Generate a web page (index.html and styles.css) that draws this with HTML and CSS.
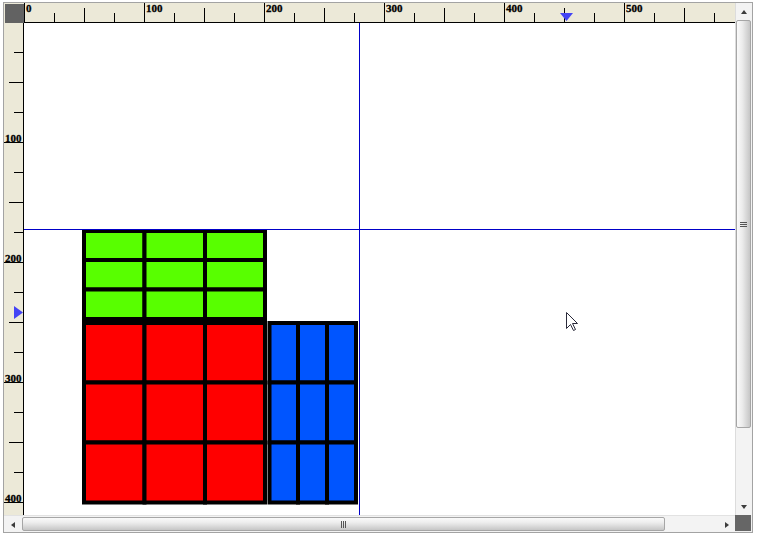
FILE: index.html
```html
<!DOCTYPE html>
<html>
<head>
<meta charset="utf-8">
<link rel="stylesheet" href="styles.css">
</head>
<body>
<div class="frame">
  <div class="corner-tl"><div class="corner-dark"></div></div>
  <div class="ruler-top">
    <svg class="rsvg" width="711" height="20" viewBox="0 0 711 20">
      <path class="tick" d="M0.5 0V19M120.5 0V19M240.5 0V19M360.5 0V19M480.5 0V19M600.5 0V19"/>
      <path class="tick" d="M60.5 5V19M180.5 5V19M300.5 5V19M420.5 5V19M540.5 5V19M660.5 5V19"/>
      <path class="tick" d="M30.5 10V19M90.5 10V19M150.5 10V19M210.5 10V19M270.5 10V19M330.5 10V19M390.5 10V19M450.5 10V19M510.5 10V19M570.5 10V19M630.5 10V19M690.5 10V19"/>
      <path class="tick" d="M0 19.5H711"/>
      <text class="rlabel" x="2" y="9">0</text>
      <text class="rlabel" x="122" y="9">100</text>
      <text class="rlabel" x="242" y="9">200</text>
      <text class="rlabel" x="362" y="9">300</text>
      <text class="rlabel" x="482" y="9">400</text>
      <text class="rlabel" x="602" y="9">500</text>
      <polygon class="marker" points="536,10 549,10 542.5,18"/>
    </svg>
  </div>
  <div class="vscroll">
    <div class="sbtn"><span class="arr arr-up"></span></div>
    <div class="vtrack">
      <div class="vthumb"><span class="grip-h"></span></div>
    </div>
    <div class="sbtn"><span class="arr arr-down"></span></div>
  </div>
  <div class="ruler-left">
    <svg class="rsvg" width="20" height="492" viewBox="0 0 20 492">
      <path class="tick" d="M0 119.5H19M0 239.5H19M0 359.5H19M0 479.5H19"/>
      <path class="tick" d="M5 59.5H19M5 179.5H19M5 299.5H19M5 419.5H19"/>
      <path class="tick" d="M10 29.5H19M10 89.5H19M10 149.5H19M10 209.5H19M10 269.5H19M10 329.5H19M10 389.5H19M10 449.5H19"/>
      <path class="tick" d="M19.5 0V492"/>
      <text class="rlabel" x="1" y="119">100</text>
      <text class="rlabel" x="1" y="239">200</text>
      <text class="rlabel" x="1" y="359">300</text>
      <text class="rlabel" x="1" y="479">400</text>
      <polygon class="marker" points="10,283 10,296 19,289.5"/>
    </svg>
  </div>
  <div class="canvas">
    <svg width="711" height="492" viewBox="0 0 711 492">
      <g class="cells green">
        <rect x="60" y="208" width="60.5" height="29"/>
        <rect x="120.5" y="208" width="60.5" height="29"/>
        <rect x="181" y="208" width="60" height="29"/>
        <rect x="60" y="237" width="60.5" height="29.5"/>
        <rect x="120.5" y="237" width="60.5" height="29.5"/>
        <rect x="181" y="237" width="60" height="29.5"/>
        <rect x="60" y="266.5" width="60.5" height="29.5"/>
        <rect x="120.5" y="266.5" width="60.5" height="29.5"/>
        <rect x="181" y="266.5" width="60" height="29.5"/>
      </g>
      <g class="cells red">
        <rect x="60" y="300" width="60.5" height="59.5"/>
        <rect x="120.5" y="300" width="60.5" height="59.5"/>
        <rect x="181" y="300" width="60" height="59.5"/>
        <rect x="60" y="359.5" width="60.5" height="60"/>
        <rect x="120.5" y="359.5" width="60.5" height="60"/>
        <rect x="181" y="359.5" width="60" height="60"/>
        <rect x="60" y="419.5" width="60.5" height="60"/>
        <rect x="120.5" y="419.5" width="60.5" height="60"/>
        <rect x="181" y="419.5" width="60" height="60"/>
      </g>
      <g class="cells blue">
        <rect x="245.5" y="300" width="28.5" height="59.5"/>
        <rect x="274" y="300" width="29" height="59.5"/>
        <rect x="303" y="300" width="29" height="59.5"/>
        <rect x="245.5" y="359.5" width="28.5" height="60"/>
        <rect x="274" y="359.5" width="29" height="60"/>
        <rect x="303" y="359.5" width="29" height="60"/>
        <rect x="245.5" y="419.5" width="28.5" height="60"/>
        <rect x="274" y="419.5" width="29" height="60"/>
        <rect x="303" y="419.5" width="29" height="60"/>
      </g>
      <path class="cross" d="M335.5 0V492M0 206.5H711"/>
      <path class="cursor" transform="translate(542 289)" d="M0.5 0.5V16.5L4.5 12.5L7.5 18.5L9.5 17.5L6.5 11.5H11.5Z"/>
    </svg>
  </div>
  <div class="hscroll">
    <div class="sbtn hbtn-l"><span class="arr arr-left"></span></div>
    <div class="htrack">
      <div class="hthumb"><span class="grip-v"></span></div>
    </div>
    <div class="sbtn hbtn-r"><span class="arr arr-right"></span></div>
  </div>
  <div class="corner-br"></div>
</div>
</body>
</html>
```

FILE: styles.css
```css
html, body {
  margin: 0;
  padding: 0;
  background: #ffffff;
}

.frame {
  box-sizing: border-box;
  margin: 2px 0 0 3px;
  width: 750px;
  height: 531px;
  border: 1px solid #a3a3a3;
  display: grid;
  grid-template-columns: 20px 711px 17px;
  grid-template-rows: 20px 492px 17px;
  background: #f0f0f0;
}

.corner-tl {
  grid-column: 1;
  grid-row: 1;
  background: #ece9d8;
  padding: 1px 0 0 1px;
  box-sizing: border-box;
}

.corner-dark {
  width: 19px;
  height: 19px;
  background: #626262;
}

.ruler-top {
  grid-column: 2;
  grid-row: 1;
  background: #ece9d8;
}

.ruler-left {
  grid-column: 1;
  grid-row: 2;
  background: #ece9d8;
}

.rsvg {
  display: block;
}

.tick {
  stroke: #000000;
  stroke-width: 1;
  fill: none;
}

.rlabel {
  font-family: "Liberation Serif", "DejaVu Serif", serif;
  font-weight: bold;
  font-size: 11px;
  fill: #000000;
  stroke: #000000;
  stroke-width: 0.3px;
}

.marker {
  fill: #4343f5;
}

.canvas {
  grid-column: 2;
  grid-row: 2;
  background: #ffffff;
  overflow: hidden;
}

.canvas svg {
  display: block;
}

.cells rect {
  stroke: #000000;
  stroke-width: 4;
}

.green rect {
  fill: #58ff00;
}

.red rect {
  fill: #ff0000;
}

.blue rect {
  fill: #0055ff;
}

.cross {
  stroke: #0000c8;
  stroke-width: 1;
  fill: none;
}

.cursor {
  fill: #ffffff;
  stroke: #2a2a3a;
  stroke-width: 1;
  stroke-linejoin: miter;
}

/* scrollbars */
.vscroll {
  grid-column: 3;
  grid-row: 1 / 3;
  display: flex;
  flex-direction: column;
  background: #f3f3f3;
  border-left: 1px solid #dcdcdc;
  box-sizing: border-box;
}

.sbtn {
  flex: 0 0 17px;
  height: 17px;
  display: flex;
  align-items: center;
  justify-content: center;
}

.vtrack {
  flex: 1;
  display: flex;
  flex-direction: column;
}

.vthumb {
  box-sizing: border-box;
  width: 15px;
  height: 408px;
  border: 1px solid #a6a6a6;
  border-radius: 2px;
  background: linear-gradient(to right, #fafafa 0%, #ececec 40%, #d6d6d6 75%, #c6c6c6 100%);
  display: flex;
  align-items: center;
  justify-content: center;
}

.grip-h {
  width: 7px;
  height: 5px;
  background: repeating-linear-gradient(to bottom, #555555 0 1px, transparent 1px 2px);
}

.hscroll {
  grid-column: 1 / 3;
  grid-row: 3;
  display: flex;
  background: #f3f3f3;
  border-top: 1px solid #e2e2e2;
  box-sizing: border-box;
}

.hbtn-l {
  flex: 0 0 18px;
}

.htrack {
  flex: 1;
  display: flex;
  padding-top: 1px;
}

.hthumb {
  box-sizing: border-box;
  width: 643px;
  height: 14px;
  border: 1px solid #a6a6a6;
  border-radius: 2px;
  background: linear-gradient(to bottom, #fafafa 0%, #ececec 40%, #d6d6d6 75%, #c6c6c6 100%);
  display: flex;
  align-items: center;
  justify-content: center;
}

.grip-v {
  width: 5px;
  height: 7px;
  background: repeating-linear-gradient(to right, #555555 0 1px, transparent 1px 2px);
}

.hbtn-r {
  flex: 0 0 17px;
}

.arr {
  width: 0;
  height: 0;
  display: block;
}

.arr-up {
  border-left: 3.5px solid transparent;
  border-right: 3.5px solid transparent;
  border-bottom: 4px solid #3c3c3c;
}

.arr-down {
  border-left: 3.5px solid transparent;
  border-right: 3.5px solid transparent;
  border-top: 4px solid #3c3c3c;
}

.arr-left {
  border-top: 3.5px solid transparent;
  border-bottom: 3.5px solid transparent;
  border-right: 4px solid #3c3c3c;
}

.arr-right {
  border-top: 3.5px solid transparent;
  border-bottom: 3.5px solid transparent;
  border-left: 4px solid #3c3c3c;
}

.corner-br {
  grid-column: 3;
  grid-row: 3;
  background: #666666;
  margin: 0 1px 1px 0;
}
```
